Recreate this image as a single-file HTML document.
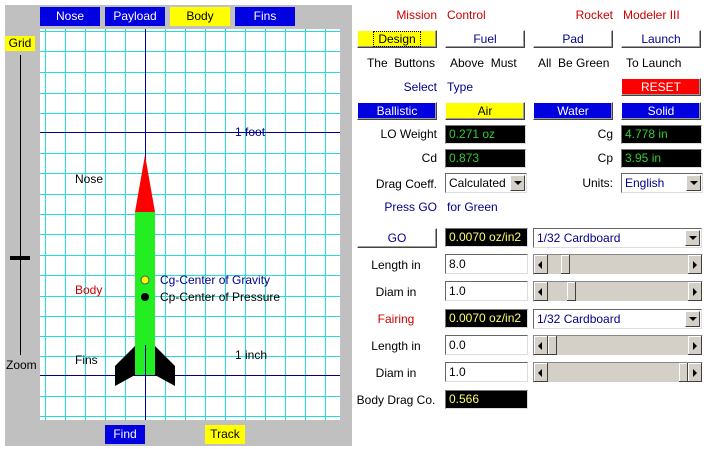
<!DOCTYPE html>
<html><head><style>
body{margin:0;width:714px;height:449px;background:#fff;position:relative;font-family:"Liberation Sans",Arial,sans-serif;font-size:12px;overflow:hidden}
.a{position:absolute}
.v{position:absolute;top:29px;width:1px;height:391px;background:#22dddd}
.h{position:absolute;left:40px;height:1px;width:300px;background:#22dddd}
.t{position:absolute;text-align:center;line-height:19px;height:19px}
.btn{position:absolute;background:#fff;border:1px solid #fff;border-right-color:#444;border-bottom-color:#444;box-shadow:inset -1px -1px #999;color:#00008b;text-align:center;line-height:16px;height:16px;box-sizing:content-box}
.lab{position:absolute;text-align:right;line-height:16px}
.blk{position:absolute;background:#000;border:1px solid #777;border-right-color:#ddd;border-bottom-color:#ddd;line-height:17px;height:17px;padding-left:3px;box-sizing:content-box}
.inp{position:absolute;background:#fff;border:1px solid #666;border-right-color:#ddd;border-bottom-color:#ddd;line-height:18px;height:18px;padding-left:3px;color:#000}
.sel{position:absolute;background:#fff;border:1px solid #666;border-right-color:#ddd;border-bottom-color:#ddd;line-height:18px;height:18px;padding-left:3px;color:#00008b}
.arr{position:absolute;right:1px;top:1px;width:15px;height:16px;background:#d4d0c8;border:1px solid #fff;border-right-color:#404040;border-bottom-color:#404040;box-sizing:border-box}
.arr:after{content:"";position:absolute;left:3px;top:5px;border-left:4px solid transparent;border-right:4px solid transparent;border-top:4px solid #000}
.sl{position:absolute;background:#d4d0c8;border:1px solid #888;border-right-color:#fff;border-bottom-color:#fff;height:19px}
.sb{position:absolute;top:0;width:14px;height:19px;background:#d4d0c8;border-right:1px solid #404040;border-bottom:1px solid #404040;box-sizing:border-box;box-shadow:inset 1px 1px #fff}
.sb.l:after{content:"";position:absolute;left:4px;top:6px;border-top:4px solid transparent;border-bottom:4px solid transparent;border-right:4px solid #000}
.sb.r:after{content:"";position:absolute;left:5px;top:6px;border-top:4px solid transparent;border-bottom:4px solid transparent;border-left:4px solid #000}
.th{position:absolute;top:0;width:9px;height:19px;background:#d4d0c8;border-right:1px solid #404040;border-bottom:1px solid #404040;box-sizing:border-box;box-shadow:inset 1px 1px #fff}
</style></head><body>
<div class="a" style="left:5px;top:5px;width:347px;height:441px;background:#c0c0c0"></div>
<div class="t" style="left:40px;top:7px;width:60px;background:#0000e0;color:#fff">Nose</div>
<div class="t" style="left:105px;top:7px;width:60px;background:#0000e0;color:#fff">Payload</div>
<div class="t" style="left:170px;top:7px;width:60px;background:#ff0;color:#000">Body</div>
<div class="t" style="left:235px;top:7px;width:60px;background:#0000e0;color:#fff">Fins</div>
<div class="a" style="left:5px;top:36px;width:30px;height:15px;background:#ff0;text-align:center;line-height:15px">Grid</div>
<div class="a" style="left:20px;top:55px;width:1px;height:300px;background:#000"></div>
<div class="a" style="left:10px;top:256px;width:20px;height:4px;background:#000"></div>
<div class="a" style="left:6px;top:358px;line-height:15px">Zoom</div>
<div class="t" style="left:105px;top:425px;width:40px;background:#0000e0;color:#fff">Find</div>
<div class="t" style="left:205px;top:425px;width:40px;background:#ff0;color:#000">Track</div>
<div class="a" style="left:40px;top:29px;width:300px;height:391px;background:#fff"></div>
<div class="v" style="left:45px"></div><div class="v" style="left:65px"></div><div class="v" style="left:85px"></div><div class="v" style="left:105px"></div><div class="v" style="left:125px"></div><div class="v" style="left:165px"></div><div class="v" style="left:185px"></div><div class="v" style="left:205px"></div><div class="v" style="left:225px"></div><div class="v" style="left:245px"></div><div class="v" style="left:265px"></div><div class="v" style="left:285px"></div><div class="v" style="left:305px"></div><div class="v" style="left:325px"></div>
<div class="h" style="top:31px"></div><div class="h" style="top:51px"></div><div class="h" style="top:72px"></div><div class="h" style="top:93px"></div><div class="h" style="top:113px"></div><div class="h" style="top:153px"></div><div class="h" style="top:173px"></div><div class="h" style="top:194px"></div><div class="h" style="top:214px"></div><div class="h" style="top:234px"></div><div class="h" style="top:255px"></div><div class="h" style="top:275px"></div><div class="h" style="top:296px"></div><div class="h" style="top:316px"></div><div class="h" style="top:336px"></div><div class="h" style="top:356px"></div><div class="h" style="top:396px"></div><div class="h" style="top:416px"></div>
<div class="h" style="top:132px;background:#00008b"></div><div class="h" style="top:375px;background:#00008b"></div>
<div class="v" style="left:145px;background:#00008b"></div>
<svg class="a" style="left:0;top:0" width="360" height="449">
<polygon points="145,155 135,212 155,212" fill="#f00"/>
<rect x="135" y="212" width="20" height="163" fill="#2e2"/>
<polygon points="135,346 115,366 115,386 135,375" fill="#000"/>
<polygon points="155,346 175,366 175,386 155,375" fill="#000"/>
<rect x="145" y="345" width="1" height="35" fill="#00008b"/>
<circle cx="145" cy="280" r="4" fill="#ff0" stroke="#555"/>
<circle cx="145" cy="297" r="4" fill="#000"/>
</svg>
<div class="a" style="left:235px;top:125px;color:#00008b">1 foot</div>
<div class="a" style="left:75px;top:172px">Nose</div>
<div class="a" style="left:75px;top:283px;color:#c00">Body</div>
<div class="a" style="left:75px;top:353px">Fins</div>
<div class="a" style="left:235px;top:348px">1 inch</div>
<div class="a" style="left:160px;top:273px;color:#00008b">Cg-Center of Gravity</div>
<div class="a" style="left:160px;top:290px">Cp-Center of Pressure</div>

<div class="lab" style="left:357px;top:7px;width:80px;color:#c00">Mission</div>
<div class="a" style="left:447px;top:7px;line-height:16px;color:#c00">Control</div>
<div class="lab" style="left:533px;top:7px;width:80px;color:#c00">Rocket</div>
<div class="a" style="left:623px;top:7px;line-height:16px;color:#c00">Modeler III</div>
<div class="btn" style="left:357px;top:30px;width:78px;background:#ff0;color:#000"><span style="outline:1px dotted #000;padding:0 4px">Design</span></div>
<div class="btn" style="left:445px;top:30px;width:78px">Fuel</div>
<div class="btn" style="left:533px;top:30px;width:78px">Pad</div>
<div class="btn" style="left:621px;top:30px;width:78px">Launch</div>
<div class="lab" style="left:357px;top:55px;width:78px">The&nbsp; Buttons</div>
<div class="a" style="left:450px;top:55px;line-height:16px">Above&nbsp; Must</div>
<div class="a" style="left:538px;top:55px;line-height:16px">All&nbsp; Be Green</div>
<div class="a" style="left:626px;top:55px;line-height:16px">To Launch</div>
<div class="lab" style="left:357px;top:79px;width:80px;color:#00008b">Select</div>
<div class="a" style="left:447px;top:79px;line-height:16px;color:#00008b">Type</div>
<div class="btn" style="left:621px;top:78px;width:78px;background:#f00;color:#fff">RESET</div>
<div class="btn" style="left:357px;top:102px;width:78px;background:#0000e0;color:#fff">Ballistic</div>
<div class="btn" style="left:445px;top:102px;width:78px;background:#ff0;color:#000">Air</div>
<div class="btn" style="left:533px;top:102px;width:78px;background:#0000e0;color:#fff">Water</div>
<div class="btn" style="left:621px;top:102px;width:78px;background:#0000e0;color:#fff">Solid</div>
<div class="lab" style="left:357px;top:126px;width:80px">LO Weight</div>
<div class="blk" style="left:445px;top:125px;width:76px;color:#3c3">0.271 oz</div>
<div class="lab" style="left:533px;top:126px;width:80px">Cg</div>
<div class="blk" style="left:621px;top:125px;width:76px;color:#3c3">4.778 in</div>
<div class="lab" style="left:357px;top:150px;width:80px">Cd</div>
<div class="blk" style="left:445px;top:149px;width:76px;color:#3c3">0.873</div>
<div class="lab" style="left:533px;top:175px;width:80px">Units:</div>
<div class="blk" style="left:621px;top:149px;width:76px;color:#3c3">3.95 in</div>
<div class="lab" style="left:533px;top:150px;width:80px">Cp</div>
<div class="lab" style="left:357px;top:176px;width:80px">Drag Coeff.</div>
<div class="sel" style="left:445px;top:173px;width:77px;color:#000">Calculated<div class="arr"></div></div>
<div class="sel" style="left:621px;top:173px;width:77px">English<div class="arr"></div></div>
<div class="lab" style="left:357px;top:199px;width:80px;color:#00008b">Press GO</div>
<div class="a" style="left:447px;top:199px;line-height:16px;color:#00008b">for Green</div>

<div class="btn" style="left:357px;top:228px;width:78px;height:18px;line-height:18px">GO</div>
<div class="blk" style="left:445px;top:228px;width:78px;color:#ff6">0.0070 oz/in2</div>
<div class="sel" style="left:533px;top:228px;width:164px">1/32 Cardboard<div class="arr"></div></div>
<div class="lab" style="left:357px;top:257px;width:78px;text-align:center">Length in</div>
<div class="inp" style="left:445px;top:254px;width:78px">8.0</div>
<div class="sl" style="left:533px;top:254px;width:168px"><div class="sb l" style="left:0"></div><div class="th" style="left:27px"></div><div class="sb r" style="right:0"></div></div>
<div class="lab" style="left:357px;top:284px;width:78px;text-align:center">Diam in</div>
<div class="inp" style="left:445px;top:281px;width:78px">1.0</div>
<div class="sl" style="left:533px;top:281px;width:168px"><div class="sb l" style="left:0"></div><div class="th" style="left:33px"></div><div class="sb r" style="right:0"></div></div>
<div class="lab" style="left:357px;top:311px;width:78px;text-align:center;color:#c00">Fairing</div>
<div class="blk" style="left:445px;top:309px;width:78px;color:#ff6">0.0070 oz/in2</div>
<div class="sel" style="left:533px;top:309px;width:164px">1/32 Cardboard<div class="arr"></div></div>
<div class="lab" style="left:357px;top:338px;width:78px;text-align:center">Length in</div>
<div class="inp" style="left:445px;top:335px;width:78px">0.0</div>
<div class="sl" style="left:533px;top:335px;width:168px"><div class="sb l" style="left:0"></div><div class="th" style="left:14px"></div><div class="sb r" style="right:0"></div></div>
<div class="lab" style="left:357px;top:365px;width:78px;text-align:center">Diam in</div>
<div class="inp" style="left:445px;top:362px;width:78px">1.0</div>
<div class="sl" style="left:533px;top:362px;width:168px"><div class="sb l" style="left:0"></div><div class="th" style="left:145px"></div><div class="sb r" style="right:0"></div></div>
<div class="lab" style="left:355px;top:392px;width:82px;text-align:center">Body Drag Co.</div>
<div class="blk" style="left:445px;top:390px;width:78px;color:#ff6">0.566</div>
</body></html>
